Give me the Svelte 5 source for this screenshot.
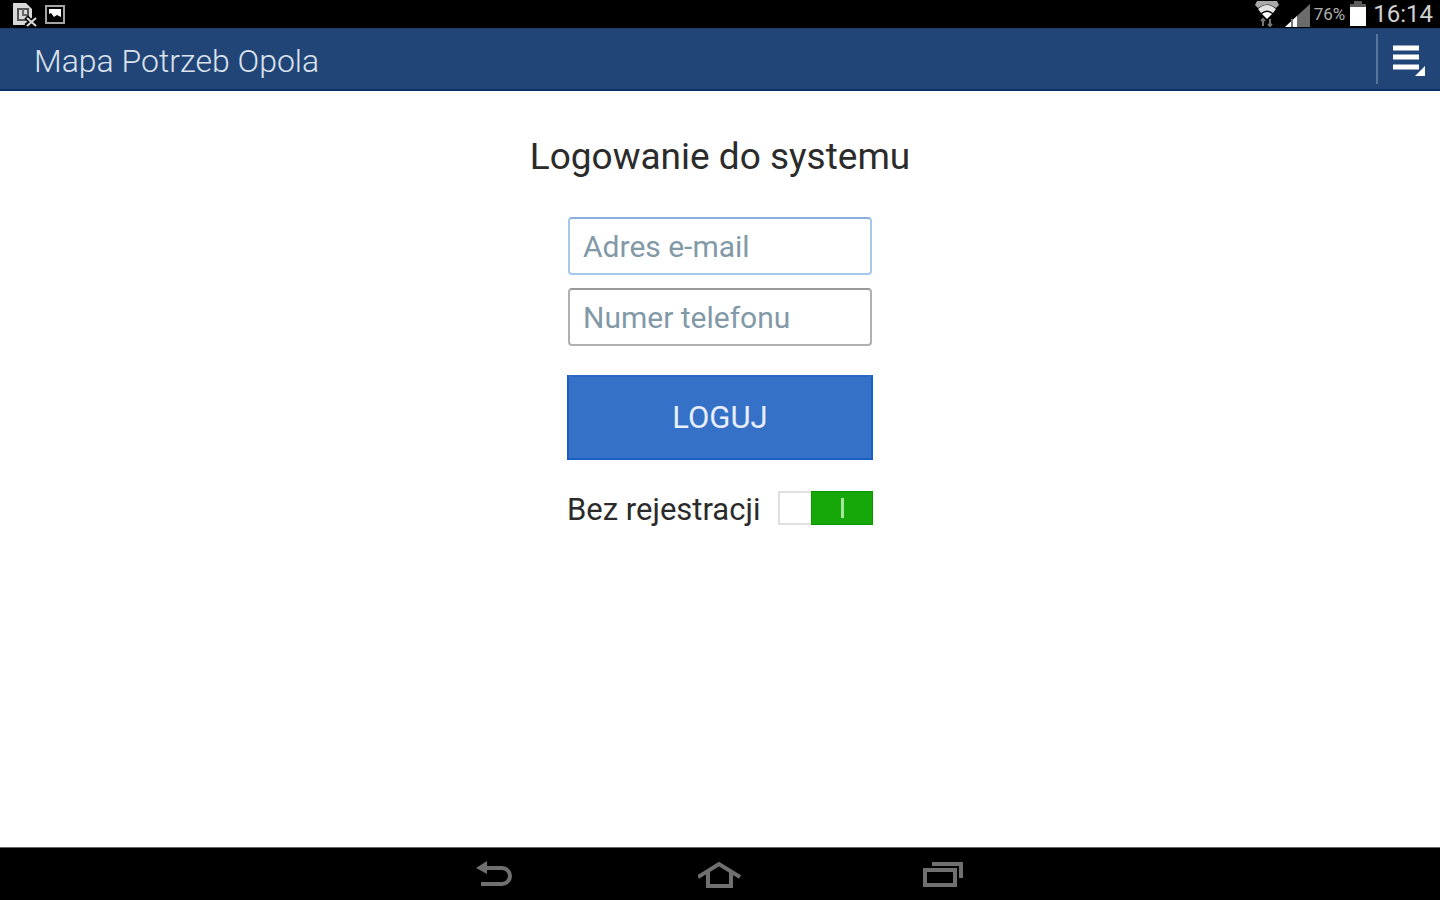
<script lang="ts">
    let email = $state('');
    let phone = $state('');
    let skipRegistration = $state(true);

    function logIn(e: SubmitEvent) {
        e.preventDefault();
    }
</script>

<div class="screen">
    <div class="status-bar">
        <div class="status-group notifications">
            <!-- SIM card missing -->
            <svg width="26" height="26" viewBox="0 0 26 26" aria-hidden="true">
                <path d="M1 2h13l6 6v16H1z" fill="#d8d8d8" />
                <path d="M6 8h10v11H6z" fill="none" stroke="#555" stroke-width="2" />
                <path d="M11 8v6h5" fill="none" stroke="#666" stroke-width="2" />
                <path d="M14 16l10 9M24 17l-10 8" stroke="#000" stroke-width="5" />
                <path d="M15 17l9 8M24 17l-9 8" stroke="#ddd" stroke-width="2" />
            </svg>
            <!-- Screenshot saved -->
            <svg width="20" height="20" viewBox="0 0 20 20" aria-hidden="true">
                <path d="M1 2h18v17H1z" fill="#000" stroke="#a5a5a5" stroke-width="2" />
                <path d="M4 5h12v8l-4-2-3 2-3-4-2 1z" fill="#fff" />
            </svg>
        </div>
        <div class="status-group">
            <svg width="24" height="26" viewBox="0 0 24 26" aria-hidden="true">
                <path d="M2 0h20l2 4-3 3Q12 0 3 7L0 4z" fill="#aaa" />
                <path d="M3 8q9-8 18 0l-3 4q-6-5-12 0z" fill="#e4e4e4" />
                <path d="M7 13q5-4 10 0l-5 5z" fill="#fff" />
                <path d="M8 18v7M15 18v7M6 20l2-2 2 2M13 23l2 2 2-2" fill="none" stroke="#777" stroke-width="2" />
            </svg>
            <svg class="signal" width="25" height="26" viewBox="0 0 25 26" aria-hidden="true">
                <path d="M0 26L25 3v23z" fill="#6c6c6c" />
                <path d="M0 26l12-11v11z" fill="#fff" />
                <path d="M7 18v8" stroke="#777" stroke-width="2" />
            </svg>
            <span class="battery-level">76%</span>
            <svg width="18" height="26" viewBox="0 0 18 26" aria-hidden="true">
                <path d="M5 0h8v3h4v4H1V3h4z" fill="#5c5c5c" />
                <path d="M1 6h16v19H1z" fill="#fff" />
            </svg>
            <time class="clock">16:14</time>
        </div>
    </div>

    <header>
        <h1>Mapa Potrzeb Opola</h1>
        <button type="button" class="menu-button" aria-label="Menu">
            <svg width="34" height="34" viewBox="0 0 34 34" aria-hidden="true">
                <path d="M1 6h26M1 15h26M1 25h26" stroke="#fff" stroke-width="5" />
                <path d="M33 24v10H23z" fill="#fff" />
            </svg>
        </button>
    </header>

    <main>
        <h2>Logowanie do systemu</h2>
        <form onsubmit={logIn}>
            <input class="field active" type="email" placeholder="Adres e-mail" aria-label="Adres e-mail" bind:value={email} />
            <input class="field" type="tel" placeholder="Numer telefonu" aria-label="Numer telefonu" bind:value={phone} />
            <button type="submit" class="login-button">LOGUJ</button>
            <div class="switch-row">
                <label for="skip-registration">Bez rejestracji</label>
                <input id="skip-registration" class="switch" type="checkbox" bind:checked={skipRegistration} />
            </div>
        </form>
    </main>

    <nav>
        <button type="button" aria-label="Back">
            <svg width="44" height="32" viewBox="0 0 44 32" fill="none" stroke="#707070" stroke-width="4" aria-hidden="true">
                <path d="M11 10h17a8 8 0 0 1 0 16H7" />
                <path d="M2 10l11-7v13z" fill="#707070" stroke="none" />
            </svg>
        </button>
        <button type="button" aria-label="Home">
            <svg width="44" height="32" viewBox="0 0 44 32" fill="none" stroke="#707070" stroke-width="4" aria-hidden="true">
                <path d="M0 19L21 6l21 13" />
                <path d="M10 14v14h23V14" />
            </svg>
        </button>
        <button type="button" aria-label="Recent apps">
            <svg width="44" height="32" viewBox="0 0 44 32" fill="none" stroke="#707070" stroke-width="4" aria-hidden="true">
                <path d="M3 12h30v15H3z" />
                <path d="M10 6h29v14" />
            </svg>
        </button>
    </nav>
</div>

<style>
    :global(body) {
        margin: 0;
        background: #fff;
    }

    .screen {
        display: flex;
        flex-direction: column;
        min-height: 100vh;
        font-family: Roboto, 'Liberation Sans', sans-serif;
        color: #2b2b2b;
    }

    button {
        padding: 0;
        border: none;
        background: none;
        font-family: inherit;
        cursor: pointer;
    }

    svg {
        display: block;
    }

    .status-bar {
        display: flex;
        justify-content: space-between;
        align-items: center;
        height: 28px;
        padding: 0 7px 0 12px;
        background: #000;
        color: #d0d0d0;
    }

    .status-group {
        display: flex;
        align-items: center;
        gap: 4px;
    }

    .notifications {
        gap: 7px;
    }

    .signal {
        margin-left: 2px;
    }

    .battery-level {
        font-size: 17px;
        line-height: 26px;
        color: #b0b0b0;
    }

    .clock {
        padding-left: 2px;
        font-size: 24px;
        line-height: 26px;
    }

    header {
        display: flex;
        justify-content: space-between;
        align-items: center;
        height: 60px;
        padding: 0 0 0 34px;
        background: #224578;
        border-top: 1px solid #1d3b68;
        border-bottom: 2px solid #0b2f68;
    }

    h1 {
        margin: 0;
        padding-top: 4px;
        font-size: 32px;
        font-weight: 300;
        line-height: 40px;
        color: #dce3ec;
    }

    .menu-button {
        padding: 8px 14px;
        border-left: 2px solid #56749c;
    }

    main {
        flex: 1;
        display: flex;
        flex-direction: column;
        align-items: center;
        padding: 42px 16px;
    }

    h2 {
        margin: 0 0 36px;
        font-size: 37px;
        font-weight: 400;
        line-height: 48px;
    }

    form {
        display: flex;
        flex-direction: column;
        width: 306px;
    }

    .field {
        box-sizing: border-box;
        height: 58px;
        margin: 0 1px 13px;
        padding: 0 13px;
        border: 2px solid #b0b0b0;
        border-top-color: #999;
        border-radius: 4px;
        background: #fff;
        font-family: inherit;
        font-size: 30px;
        color: #2b2b2b;
        outline: none;
    }

    .field.active,
    .field:focus {
        border-color: #a3c9f0;
        border-top-color: #8aaede;
    }

    .field::placeholder {
        color: #8299a8;
        opacity: 1;
    }

    .login-button {
        height: 85px;
        margin-top: 16px;
        border: 2px solid #1a5fc4;
        border-top-color: #2c69c6;
        background: #3671c8;
        font-size: 31px;
        color: #e8effa;
    }

    .switch-row {
        display: flex;
        justify-content: space-between;
        align-items: center;
        margin-top: 30px;
        font-size: 31px;
        line-height: 40px;
    }

    .switch {
        appearance: none;
        display: flex;
        box-sizing: border-box;
        width: 95px;
        height: 34px;
        margin: 0 0 4px;
        border: 2px solid #e0e0e0;
        background: #fff;
        cursor: pointer;
    }

    .switch:checked {
        padding-left: 33px;
        border-width: 0;
        box-shadow: inset 0 0 0 2px #e0e0e0;
    }

    .switch:checked::before {
        content: '';
        flex: 1;
        border: 1px solid #0b9500;
        background: linear-gradient(#a4e39b, #a4e39b) center / 3px 20px no-repeat #16a808;
    }

    nav {
        display: flex;
        justify-content: center;
        align-items: center;
        gap: 180px;
        height: 52px;
        border-top: 1px solid #666;
        background: #000;
    }
</style>
